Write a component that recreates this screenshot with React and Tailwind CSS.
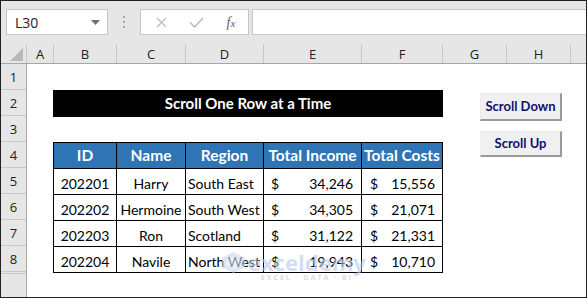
import React from 'react';

const cols = [
  { label: 'A', w: 27 },
  { label: 'B', w: 63 },
  { label: 'C', w: 69 },
  { label: 'D', w: 78 },
  { label: 'E', w: 98 },
  { label: 'F', w: 81 },
  { label: 'G', w: 64 },
  { label: 'H', w: 64 },
];

const rows = [
  { id: '202201', name: 'Harry', region: 'South East', income: '34,246', costs: '15,556' },
  { id: '202202', name: 'Hermoine', region: 'South West', income: '34,305', costs: '21,071' },
  { id: '202203', name: 'Ron', region: 'Scotland', income: '31,122', costs: '21,331' },
  { id: '202204', name: 'Navile', region: 'North West', income: '19,943', costs: '10,710' },
];

const ui = { fontFamily: '"Open Sans", "Noto Sans", sans-serif' };
const cell = { fontFamily: 'Lato, "Liberation Sans", sans-serif' };

function Toolbar() {
  return (
    <div className="flex h-[43px] items-start gap-0 pt-[8px] pl-[5px]">
      {/* Name box */}
      <div className="flex h-[26px] w-[102px] items-center justify-between border border-[#c6c6c6] bg-white pl-[8px] pr-[7px]">
        <span className="text-[14px] text-[#222]" style={ui}>L30</span>
        <svg width="9" height="5" viewBox="0 0 9 5">
          <path d="M0 0 L9 0 L4.5 5 Z" fill="#6f6f6f" />
        </svg>
      </div>
      {/* Separator dots */}
      <div className="flex h-[26px] w-[32px] flex-col items-center justify-center gap-[3px]">
        <span className="h-[2px] w-[2px] bg-[#a6a6a6]" />
        <span className="h-[2px] w-[2px] bg-[#a6a6a6]" />
        <span className="h-[2px] w-[2px] bg-[#a6a6a6]" />
      </div>
      {/* Formula buttons */}
      <div className="flex h-[26px] w-[109px] items-center border border-[#c6c6c6] bg-white">
        <div className="flex w-[36px] justify-center pl-[4px]">
          <svg width="11" height="11" viewBox="0 0 11 11">
            <path d="M1 1 L10 10 M10 1 L1 10" stroke="#bdbdbd" strokeWidth="1.4" />
          </svg>
        </div>
        <div className="flex w-[38px] justify-center">
          <svg width="15" height="11" viewBox="0 0 15 11">
            <path d="M1 5.5 L5.5 10 L14 1" stroke="#bdbdbd" strokeWidth="1.6" fill="none" />
          </svg>
        </div>
        <div className="flex w-[32px] justify-center">
          <span className="text-[14px] italic text-[#606060]" style={{ fontFamily: '"Liberation Serif", serif' }}>
            f<span className="text-[11px]">x</span>
          </span>
        </div>
      </div>
      {/* Formula input */}
      <div className="ml-[3px] h-[26px] flex-1 border border-r-0 border-[#c6c6c6] bg-white" />
    </div>
  );
}

function ColumnHeader() {
  return (
    <div className="flex h-[20px] border-b border-[#a6a6a6]">
      <div className="flex w-[26px] items-end justify-end border-r border-[#c8c8c8] pb-[2px] pr-[3px]">
        <svg width="13" height="13" viewBox="0 0 13 13">
          <path d="M13 0 L13 13 L0 13 Z" fill="#b8b8b8" />
        </svg>
      </div>
      {cols.map((c) => (
        <div
          key={c.label}
          className="flex items-center justify-center border-r border-[#c8c8c8] pt-[2px] text-[13px] text-[#222]"
          style={{ ...ui, width: c.w }}
        >
          {c.label}
        </div>
      ))}
      <div className="flex-1" />
    </div>
  );
}

function RowHeader() {
  return (
    <div className="flex w-[26px] flex-col border-r border-[#ababab]">
      {[1, 2, 3, 4, 5, 6, 7, 8].map((n) => (
        <div
          key={n}
          className="flex h-[26px] items-center justify-center border-b border-[#c8c8c8] pt-[3px] text-[13px] text-[#222]"
          style={ui}
        >
          {n}
        </div>
      ))}
      <div className="h-[2px] border-b border-[#c8c8c8]" />
      <div className="flex-1" />
    </div>
  );
}

function DataTable() {
  const head = ['ID', 'Name', 'Region', 'Total Income', 'Total Costs'];
  return (
    <div className="ml-[26px] w-[390px] border-l border-t border-black" style={cell}>
      <div className="grid grid-cols-[63px_69px_78px_98px_81px]">
        {head.map((h) => (
          <div
            key={h}
            className="flex h-[26px] items-center justify-center border-b border-r border-black bg-[#2f75b5] text-[15.5px] font-bold text-white"
          >
            {h}
          </div>
        ))}
        {rows.map((r) => (
          <React.Fragment key={r.id}>
            <div className="flex h-[26px] items-center justify-center border-b border-r border-black pt-[3px] text-[14px] text-black">
              {r.id}
            </div>
            <div className="flex h-[26px] items-center justify-center border-b border-r border-black pt-[3px] text-[14px] text-black">
              {r.name}
            </div>
            <div className="flex h-[26px] items-center border-b border-r border-black pl-[2px] pt-[3px] text-[14px] text-black">
              {r.region}
            </div>
            <div className="flex h-[26px] items-center justify-between border-b border-r border-black pl-[7px] pr-[8px] pt-[3px] text-[14px] text-black">
              <span>$</span>
              <span>{r.income}</span>
            </div>
            <div className="flex h-[26px] items-center justify-between border-b border-r border-black pl-[8px] pr-[7px] pt-[3px] text-[14px] text-black">
              <span>$</span>
              <span>{r.costs}</span>
            </div>
          </React.Fragment>
        ))}
      </div>
    </div>
  );
}

function SheetButton({ children, className }) {
  return (
    <button
      className={`absolute left-[453px] flex w-[82px] items-center justify-center border border-b-2 border-r-2 border-l-[#ececec] border-t-[#ececec] border-b-[#9a9a9a] border-r-[#9a9a9a] bg-[#f0f0f0] text-[13px] font-bold text-[#10106e] ${className}`}
      style={cell}
    >
      {children}
    </button>
  );
}

function Watermark() {
  return (
    <div className="pointer-events-none absolute left-[195px] top-[187px] flex items-start gap-[3px] opacity-60">
      <svg width="23" height="21" viewBox="0 0 24 22" className="mt-[1px]">
        <path d="M12 0 L24 6 L24 16 L12 22 L0 16 L0 6 Z" fill="#c9d6ee" />
        <path d="M12 5 L19 8.5 L19 14 L12 17.5 L5 14 L5 8.5 Z" fill="#e3eaf7" />
      </svg>
      <div className="flex flex-col items-center">
        <span
          className="text-[22px] font-bold leading-[22px] text-[#b9c9ea]"
          style={{ fontFamily: '"Open Sans", sans-serif' }}
        >
          exceldemy
        </span>
        <span
          className="text-[7px] font-bold leading-[9px] tracking-[2px] text-[#c8c8c8]"
          style={{ fontFamily: '"Open Sans", sans-serif' }}
        >
          EXCEL · DATA · BI
        </span>
      </div>
    </div>
  );
}

export default function App() {
  return (
    <div className="flex h-[298px] w-[587px] flex-col overflow-hidden border border-[#222] bg-[#e6e6e6]">
      <Toolbar />
      <ColumnHeader />
      <div className="flex flex-1">
        <RowHeader />
        <div className="relative flex-1 bg-white">
          <div className="h-[26px]" />
          <div
            className="ml-[26px] flex h-[27px] w-[390px] items-center justify-center bg-black text-[15px] font-bold text-white"
            style={cell}
          >
            Scroll One Row at a Time
          </div>
          <div className="h-[25px]" />
          <DataTable />
          <SheetButton className="top-[29px] h-[28px]">Scroll Down</SheetButton>
          <SheetButton className="top-[67px] h-[26px]">Scroll Up</SheetButton>
          <Watermark />
        </div>
      </div>
    </div>
  );
}
